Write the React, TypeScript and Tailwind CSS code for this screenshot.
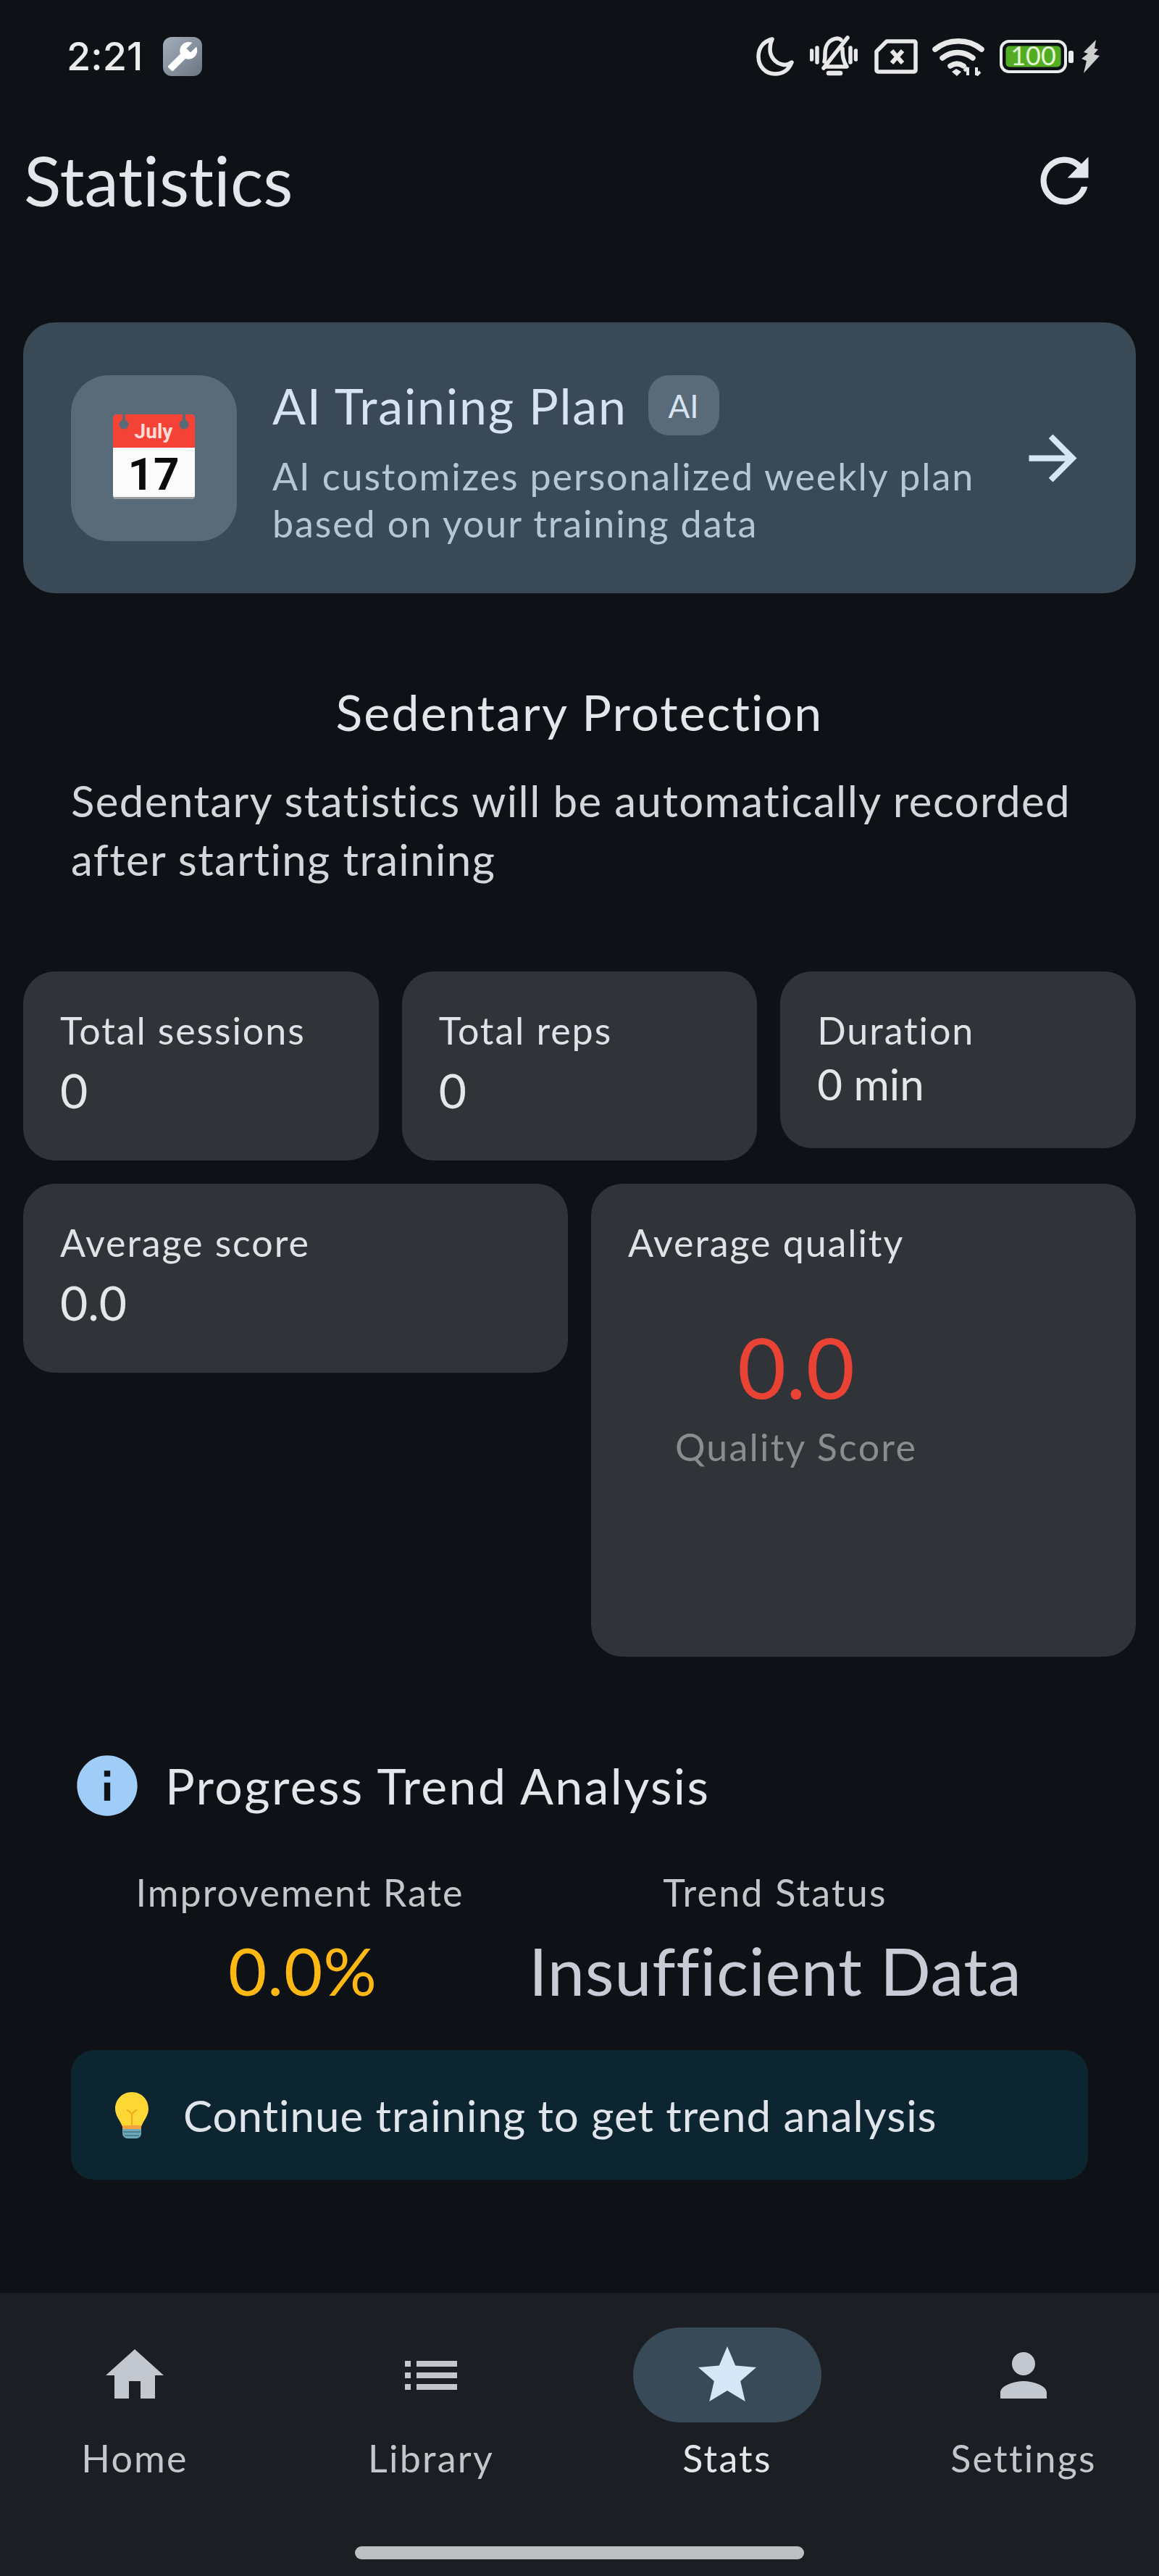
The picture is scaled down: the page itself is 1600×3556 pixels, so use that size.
const PATHS = {
  refresh:
    "M17.65 6.35C16.2 4.9 14.21 4 12 4c-4.42 0-7.99 3.58-7.99 8s3.57 8 7.99 8c3.73 0 6.84-2.55 7.73-6h-2.08c-.82 2.33-3.04 4-5.65 4-3.31 0-6-2.69-6-6s2.69-6 6-6c1.66 0 3.14.69 4.22 1.78L13 11h7V4l-2.35 2.35z",
  arrow: "M12 4l-1.41 1.41L16.17 11H4v2h12.17l-5.58 5.59L12 20l8-8z",
  info: "M12 2C6.48 2 2 6.48 2 12s4.48 10 10 10 10-4.48 10-10S17.52 2 12 2zm1 15h-2v-6h2v6zm0-8h-2V7h2v2z",
  home: "M10 20v-6h4v6h5v-8h3L12 3 2 12h3v8z",
  list: "M3 13h2v-2H3v2zm0 4h2v-2H3v2zm0-8h2V7H3v2zm4 4h14v-2H7v2zm0 4h14v-2H7v2zM7 7v2h14V7H7z",
  star: "M12 17.27L18.18 21l-1.64-7.03L22 9.24l-7.19-.61L12 2 9.19 8.63 2 9.24l5.46 4.73L5.82 21z",
  person:
    "M12 12c2.21 0 4-1.79 4-4s-1.79-4-4-4-4 1.79-4 4 1.79 4 4 4zm0 2c-2.67 0-8 1.34-8 4v2h16v-2c0-2.66-5.33-4-8-4z",
}

const NAV_ITEMS = [
  { label: "Home", icon: PATHS.home },
  { label: "Library", icon: PATHS.list },
  { label: "Stats", icon: PATHS.star, active: true },
  { label: "Settings", icon: PATHS.person },
]

function Icon({ d, className }: { d: string; className: string }) {
  return (
    <svg viewBox="0 0 24 24" fill="currentColor" className={className}>
      <path d={d} />
    </svg>
  )
}

function StatusIcons() {
  return (
    <div className="flex items-center">
      {/* moon */}
      <svg viewBox="0 0 52 54" className="h-[54px] w-[52px] text-[#e8e8e8]" fill="none" stroke="currentColor" strokeWidth="5.5" strokeLinejoin="round">
        <path d="M22 3C10 6 3 15 3 27c0 14 10 24 23 24 11 0 19-6 23-16-4 3-9 4-13 3-10-2-17-11-17-21 0-5 1-10 3-14z" />
      </svg>
      {/* muted bell */}
      <svg viewBox="0 0 66 58" className="ml-[22px] h-[58px] w-[66px] text-[#e8e8e8]" fill="none" stroke="currentColor" strokeWidth="5.5" strokeLinecap="round" strokeLinejoin="round">
        <path d="M2.500 21v12M10 17v20M56 17v20M63.500 21v12" />
        <path d="M20 36c1-3 1-6 1-11 0-12 6-20 17-21 2 0 4 1 5 2" />
        <path d="M45 18c0 11 1 17 6 25H22" />
        <path d="M52 3L19 45" />
        <path d="M26 52h16" strokeWidth="6.500" />
      </svg>
      {/* no sim */}
      <svg viewBox="0 0 60 48" className="ml-[23px] h-[48px] w-[60px] text-[#e8e8e8]" fill="none" stroke="currentColor" strokeLinejoin="round">
        <path d="M17 3h38a2 2 0 012 2v38a2 2 0 01-2 2H5a2 2 0 01-2-2V17z" strokeWidth="5.500" />
        <path d="M24 16l15 17M39 16L24 33" strokeWidth="6" />
      </svg>
      {/* wifi */}
      <svg viewBox="0 0 72 54" className="ml-[20px] h-[54px] w-[72px] text-[#e8e8e8]" fill="none" stroke="currentColor" strokeWidth="7.500" strokeLinecap="round">
        <path d="M4 17c18-15 46-15 64 0" />
        <path d="M14 29c13-10 29-10 42 0" />
        <path d="M25 40c6-4 12-4 18 0" />
        <path d="M33 44l-6 4 7 6 6-6z" fill="currentColor" stroke="none" />
        <path d="M49 53V42M49 42l-5 5M61 53V42M61 53l5-5" strokeWidth="4" strokeLinecap="butt" />
      </svg>
      {/* battery */}
      <svg viewBox="0 0 102 46" className="ml-[21px] h-[46px] w-[102px]" fill="none">
        <rect x="2" y="2" width="89" height="42" rx="11" stroke="#ececec" strokeWidth="4" />
        <rect x="8.500" y="8.500" width="76" height="29" rx="5" fill="#52ad23" />
        <text x="46.500" y="35" textAnchor="middle" fontSize="36" fill="#e4f5d8" fontFamily="Lato, sans-serif">100</text>
        <rect x="95" y="15" width="7" height="17" rx="2.500" fill="#ececec" />
      </svg>
      {/* bolt */}
      <svg viewBox="0 0 28 46" className="ml-[10px] h-[46px] w-[28px] text-[#cfcfcf]" fill="currentColor">
        <path d="M21 0L4 17l6 2-9 7 7 3-4 17 22-24-8-2 6-7-5-1z" />
      </svg>
    </div>
  )
}

function CalendarEmoji() {
  return (
    <svg viewBox="0 0 113 117" className="h-[117px] w-[113px] overflow-visible">
      <path d="M5 0h103a5 5 0 015 5v108a4 4 0 01-4 4H4a4 4 0 01-4-4V5a5 5 0 015-5z" fill="#9a9ea3" />
      <path d="M0 45h113v67a2 2 0 01-2 2H2a2 2 0 01-2-2z" fill="#fbfbfb" />
      <path d="M5 0h103a5 5 0 015 5v41H0V5a5 5 0 015-5z" fill="#f44336" />
      <circle cx="15" cy="14" r="6.500" fill="#596a78" />
      <circle cx="98" cy="14" r="6.500" fill="#596a78" />
      <rect x="13" y="0" width="4" height="10" fill="#596a78" />
      <rect x="96" y="0" width="4" height="10" fill="#596a78" />
      <text x="56" y="33" textAnchor="middle" fontSize="28" fontWeight="700" fill="#ffdcd6" fontFamily="Roboto, sans-serif">July</text>
      <text x="56" y="104" textAnchor="middle" fontSize="62" fontWeight="700" fill="#0b0b0b" fontFamily="Roboto, sans-serif">17</text>
    </svg>
  )
}

function BulbEmoji() {
  return (
    <svg viewBox="0 0 48 64" className="h-[64px] w-[48px]">
      <path d="M24 0C10 0 1 11 1 23c0 10 7 16 10 25h26c3-9 10-15 10-25C47 11 38 0 24 0z" fill="#fdd835" />
      <path d="M17 24l7 6 7-6M24 30v18" fill="none" stroke="#f5a623" strokeWidth="2" />
      <rect x="11" y="46" width="26" height="5" fill="#f2a340" />
      <path d="M11 51h26v6a7 7 0 01-7 7H18a7 7 0 01-7-7z" fill="#6fa8b8" />
      <path d="M12 55h24M14 60h20" stroke="#3f7486" strokeWidth="1.500" />
    </svg>
  )
}

function StatCard({ label, value, small }: { label: string; value: string; small?: boolean }) {
  return (
    <div className={`rounded-[44px] bg-[#303338] pl-[51px] pt-[51px] ${small ? "pb-[57px]" : "pb-[62px]"}`}>
      <div className="text-[52px] leading-[60px] tracking-[1.9px] text-[#dfe2e6]">{label}</div>
      {small ? (
        <div className="mt-[12px] text-[60px] leading-[64px] text-[#e4e6ea]">{value}</div>
      ) : (
        <div className="mt-[18px] text-[66px] leading-[70px] text-[#e4e6ea]">{value}</div>
      )}
    </div>
  )
}

export default function App() {
  return (
    <div className="flex h-[3556px] w-[1600px] flex-col overflow-hidden bg-[#0e1217] [font-family:Lato,sans-serif] [font-variant-ligatures:none]">
      <div className="flex h-[156px] items-center justify-between pl-[92px] pr-[80px]">
        <div className="flex items-center gap-[28px]">
          <span className="text-[54px] font-medium leading-none text-[#ececec] [font-family:Inter,sans-serif]">2:21</span>
          <div className="flex h-[54px] w-[54px] items-center justify-center rounded-[12px] bg-gradient-to-br from-[#a4aebb] to-[#6b7684]">
            <svg viewBox="0 0 24 24" className="h-[44px] w-[44px] -scale-x-100 text-white" fill="currentColor">
              <path d="M22.700 19l-9.100-9.100c.9-2.300.4-5-1.500-6.900-2-2-5-2.400-7.400-1.300L9 6 6 9 1.600 4.700C.4 7.100.9 10.100 2.900 12.100c1.900 1.900 4.600 2.400 6.900 1.500l9.100 9.100c.4.400 1 .4 1.400 0l2.300-2.300c.5-.4.500-1.100.1-1.400z" />
            </svg>
          </div>
        </div>
        <StatusIcons />
      </div>

      <div className="flex h-[192px] items-center justify-between pl-[33px] pr-[81px]">
        <h1 className="-mt-[8px] text-[95px] font-normal leading-[116px] text-[#e3e6ea]">Statistics</h1>
        <Icon d={PATHS.refresh} className="-mt-[6px] h-[99px] w-[99px] text-[#e3e6ea]" />
      </div>

      <div className="mx-[32px] mt-[97px] flex h-[374px] items-center rounded-[44px] bg-[#394956] pl-[66px] pr-[65px]">
        <div className="flex h-[229px] w-[229px] shrink-0 items-center justify-center rounded-[52px] bg-[#596a78] pb-[3px]">
          <CalendarEmoji />
        </div>
        <div className="ml-[49px] flex-1 pt-[8px]">
          <div className="flex items-center">
            <span className="text-[68px] leading-[84px] tracking-[1.8px] text-[#d6e4f2]">AI Training Plan</span>
            <span className="ml-[29px] flex h-[83px] w-[98px] items-center justify-center rounded-[28px] bg-[#596a78] text-[44px] text-[#d6e4f2]">AI</span>
          </div>
          <p className="mt-[23px] text-[52px] leading-[65px] tracking-[1.9px] text-[#b5c7d6]">
            AI customizes personalized weekly plan
            <br />
            based on your training data
          </p>
        </div>
        <Icon d={PATHS.arrow} className="h-[99px] w-[99px] shrink-0 text-[#d6e6f7]" />
      </div>

      <h2 className="mt-[119px] text-center text-[68px] font-normal leading-[90px] tracking-[2.2px] text-[#e3e6ea]">Sedentary Protection</h2>
      <p className="ml-[98px] mt-[37px] text-[60px] leading-[81px] tracking-[1.4px] text-[#d3d6da]">
        Sedentary statistics will be automatically recorded
        <br />
        after starting training
      </p>

      <div className="mx-[32px] mt-[114px] grid grid-cols-3 items-start gap-[32px]">
        <StatCard label="Total sessions" value="0" />
        <StatCard label="Total reps" value="0" />
        <StatCard label="Duration" value="0 min" small />
      </div>

      <div className="mx-[32px] mt-[32px] grid grid-cols-2 items-start gap-[32px]">
        <StatCard label="Average score" value="0.0" />
        <div className="h-[653px] rounded-[44px] bg-[#303338] pl-[51px] pt-[51px]">
          <div className="text-[52px] leading-[60px] tracking-[1.9px] text-[#dfe2e6]">Average quality</div>
          <div className="flex w-[464px] flex-col items-center">
            <div className="mt-[82px] text-[116px] leading-[120px] text-[#ea4335]">0.0</div>
            <div className="mt-[20px] text-[52px] leading-[60px] tracking-[2.2px] text-[#8a8d90]">Quality Score</div>
          </div>
        </div>
      </div>

      <div className="ml-[98px] mt-[128px] flex h-[100px] items-center gap-[30px]">
        <Icon d={PATHS.info} className="h-[100px] w-[100px] text-[#9fcdf7]" />
        <span className="text-[68px] leading-[84px] tracking-[2.400px] text-[#e3e6ea]">Progress Trend Analysis</span>
      </div>

      <div className="ml-[98px] mt-[67px] flex">
        <div className="w-[632px] text-center">
          <div className="text-[52px] leading-[60px] tracking-[2px] text-[#c3c6ca]">Improvement Rate</div>
          <div className="mt-[23px] pl-[8px] text-[92px] leading-[110px] tracking-[1px] text-[#fdb813]">0.0%</div>
        </div>
        <div className="w-[680px] text-center">
          <div className="text-[52px] leading-[60px] tracking-[2.2px] text-[#c3c6ca]">Trend Status</div>
          <div className="mt-[23px] whitespace-nowrap text-[92px] leading-[110px] tracking-[0.7px] text-[#c8ccd6]">Insufficient Data</div>
        </div>
      </div>

      <div className="mx-[98px] mt-[55px] flex h-[179px] items-center rounded-[32px] bg-[#0d2431] pl-[60px]">
        <BulbEmoji />
        <span className="ml-[47px] text-[60px] leading-[72px] tracking-[1px] text-[#dfe5ea]">Continue training to get trend analysis</span>
      </div>

      <nav className="mt-auto flex h-[391px] flex-col bg-[#1b1f24] pt-[48px]">
        <div className="flex gap-[37px]">
          {NAV_ITEMS.map((item) => (
            <div key={item.label} className="flex w-[372px] flex-col items-center">
              <div className={`flex h-[131px] w-[260px] items-center justify-center rounded-[66px] ${item.active ? "bg-[#384957] text-[#d6e6f7]" : "text-[#c3c8d0]"}`}>
                <Icon d={item.icon} className="h-[96px] w-[96px]" />
              </div>
              <span className={`mt-[19px] text-[52px] leading-[60px] tracking-[2.2px] ${item.active ? "text-[#e3e6ea]" : "text-[#c3c6ca]"}`}>{item.label}</span>
            </div>
          ))}
        </div>
        <div className="mx-auto mt-[92px] h-[18px] w-[620px] rounded-full bg-[#bdbfc0]" />
      </nav>
    </div>
  )
}
